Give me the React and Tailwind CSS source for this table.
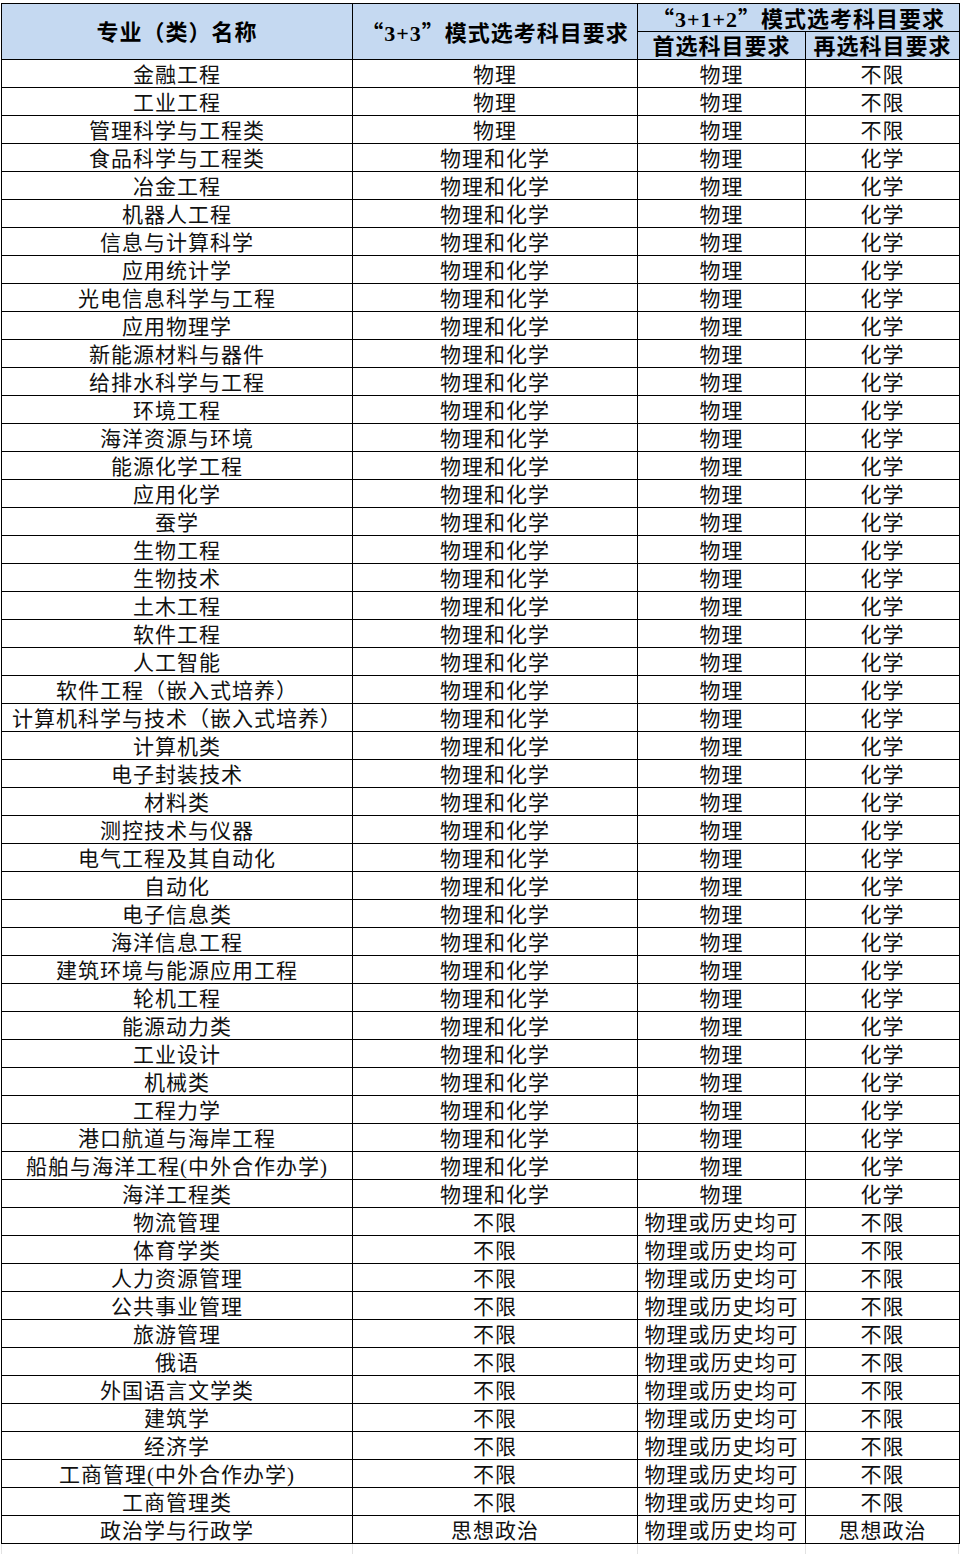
const rows = [
  ["金融工程", "物理", "物理", "不限"],
  ["工业工程", "物理", "物理", "不限"],
  ["管理科学与工程类", "物理", "物理", "不限"],
  ["食品科学与工程类", "物理和化学", "物理", "化学"],
  ["冶金工程", "物理和化学", "物理", "化学"],
  ["机器人工程", "物理和化学", "物理", "化学"],
  ["信息与计算科学", "物理和化学", "物理", "化学"],
  ["应用统计学", "物理和化学", "物理", "化学"],
  ["光电信息科学与工程", "物理和化学", "物理", "化学"],
  ["应用物理学", "物理和化学", "物理", "化学"],
  ["新能源材料与器件", "物理和化学", "物理", "化学"],
  ["给排水科学与工程", "物理和化学", "物理", "化学"],
  ["环境工程", "物理和化学", "物理", "化学"],
  ["海洋资源与环境", "物理和化学", "物理", "化学"],
  ["能源化学工程", "物理和化学", "物理", "化学"],
  ["应用化学", "物理和化学", "物理", "化学"],
  ["蚕学", "物理和化学", "物理", "化学"],
  ["生物工程", "物理和化学", "物理", "化学"],
  ["生物技术", "物理和化学", "物理", "化学"],
  ["土木工程", "物理和化学", "物理", "化学"],
  ["软件工程", "物理和化学", "物理", "化学"],
  ["人工智能", "物理和化学", "物理", "化学"],
  ["软件工程（嵌入式培养）", "物理和化学", "物理", "化学"],
  ["计算机科学与技术（嵌入式培养）", "物理和化学", "物理", "化学"],
  ["计算机类", "物理和化学", "物理", "化学"],
  ["电子封装技术", "物理和化学", "物理", "化学"],
  ["材料类", "物理和化学", "物理", "化学"],
  ["测控技术与仪器", "物理和化学", "物理", "化学"],
  ["电气工程及其自动化", "物理和化学", "物理", "化学"],
  ["自动化", "物理和化学", "物理", "化学"],
  ["电子信息类", "物理和化学", "物理", "化学"],
  ["海洋信息工程", "物理和化学", "物理", "化学"],
  ["建筑环境与能源应用工程", "物理和化学", "物理", "化学"],
  ["轮机工程", "物理和化学", "物理", "化学"],
  ["能源动力类", "物理和化学", "物理", "化学"],
  ["工业设计", "物理和化学", "物理", "化学"],
  ["机械类", "物理和化学", "物理", "化学"],
  ["工程力学", "物理和化学", "物理", "化学"],
  ["港口航道与海岸工程", "物理和化学", "物理", "化学"],
  ["船舶与海洋工程(中外合作办学)", "物理和化学", "物理", "化学"],
  ["海洋工程类", "物理和化学", "物理", "化学"],
  ["物流管理", "不限", "物理或历史均可", "不限"],
  ["体育学类", "不限", "物理或历史均可", "不限"],
  ["人力资源管理", "不限", "物理或历史均可", "不限"],
  ["公共事业管理", "不限", "物理或历史均可", "不限"],
  ["旅游管理", "不限", "物理或历史均可", "不限"],
  ["俄语", "不限", "物理或历史均可", "不限"],
  ["外国语言文学类", "不限", "物理或历史均可", "不限"],
  ["建筑学", "不限", "物理或历史均可", "不限"],
  ["经济学", "不限", "物理或历史均可", "不限"],
  ["工商管理(中外合作办学)", "不限", "物理或历史均可", "不限"],
  ["工商管理类", "不限", "物理或历史均可", "不限"],
  ["政治学与行政学", "思想政治", "物理或历史均可", "思想政治"],
];

const font = { fontFamily: '"Liberation Serif", "Noto Sans CJK SC", serif' };
const cjk = { fontFamily: '"Noto Sans CJK SC", sans-serif' };

const head = "border border-black bg-[#c5d9f1] p-0 pt-[2px] text-center text-[22px] font-bold leading-none tracking-[1px]";

export default function App() {
  return (
    <div className="min-h-[1554px] bg-white pl-[1px] pt-[3px] text-black" style={font}>
      <table className="table-fixed border-collapse" style={{ width: 958 }}>
        <colgroup>
          <col className="w-[351px]" />
          <col className="w-[285px]" />
          <col className="w-[168px]" />
          <col className="w-[154px]" />
        </colgroup>
        <thead>
          <tr className="h-[28px]">
            <th rowSpan={2} className={head}>
              专业（类）名称
            </th>
            <th rowSpan={2} className={head}>
              <span style={cjk}>“</span>3+3<span style={cjk}>”</span>模式选考科目要求
            </th>
            <th colSpan={2} className={head}>
              <span style={cjk}>“</span>3+1+2<span style={cjk}>”</span>模式选考科目要求
            </th>
          </tr>
          <tr className="h-[28px]">
            <th className={head}>首选科目要求</th>
            <th className={head}>再选科目要求</th>
          </tr>
        </thead>
        <tbody>
          {rows.map((r, i) => (
            <tr key={i} className="h-[28px]">
              {r.map((c, j) => (
                <td
                  key={j}
                  className="whitespace-nowrap border border-black p-0 pt-[3px] text-center text-[21px] leading-none tracking-[1px] text-[#111]"
                >
                  {c}
                </td>
              ))}
            </tr>
          ))}
        </tbody>
      </table>
      <div className="grid h-[10px] w-[958px] grid-cols-[351px_285px_168px_154px]">
        <div className="border-l border-[#e2e2e2]" />
        <div className="border-l border-[#e2e2e2]" />
        <div className="border-l border-[#e2e2e2]" />
        <div className="border-x border-[#e2e2e2]" />
      </div>
    </div>
  );
}
